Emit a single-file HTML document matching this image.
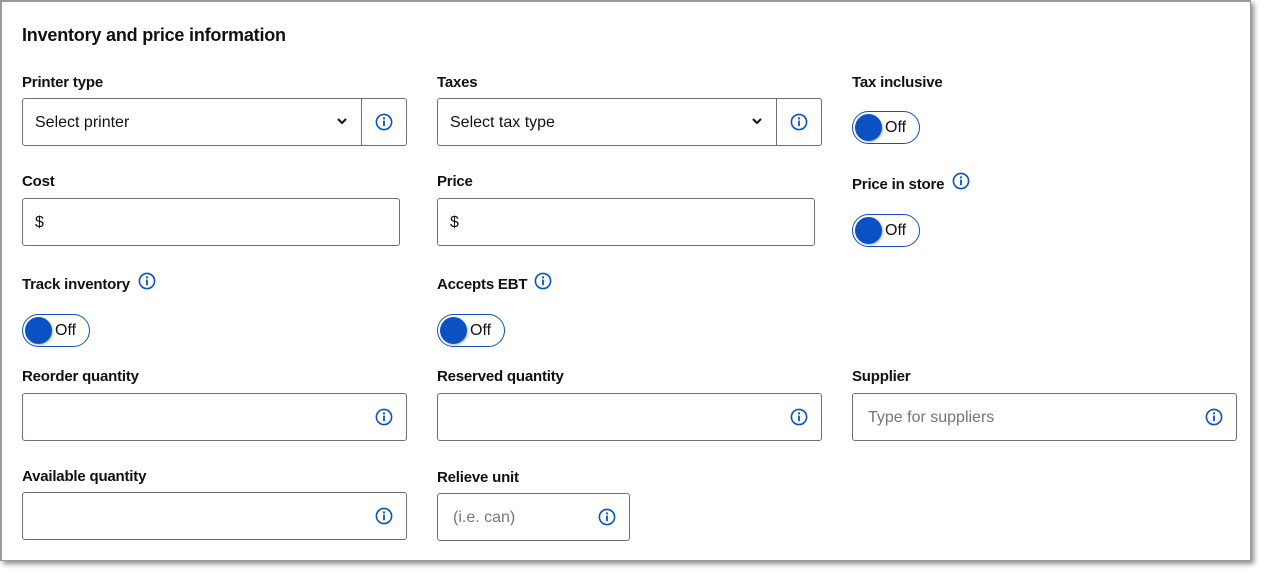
<!DOCTYPE html>
<html><head><meta charset="utf-8"><style>
*{box-sizing:border-box;margin:0;padding:0}
body{width:1264px;height:574px;background:#fff;font-family:"Liberation Sans",Arial,sans-serif;position:relative;overflow:hidden}
.frame{position:absolute;left:0;top:0;width:1251px;height:561px;border:1px solid #9a9a9a;border-width:2px 1px 1px 2px;box-shadow:3px 3px 5px rgba(0,0,0,.45);background:#fff}
.a{position:absolute}
.h{font-size:18px;font-weight:bold;color:#111;letter-spacing:-0.2px}
.l{font-size:15px;font-weight:bold;color:#111;letter-spacing:-0.2px;line-height:18px}
.box{position:absolute;border:1px solid #6f6f6f;border-radius:3px;background:#fff;font-size:16px;color:#111}
.box .t{position:absolute;left:12px;top:15px}
.ph{color:#767676}
.ic{position:absolute;width:18px;height:18px}
.tg{position:absolute;width:68px;height:33px;border:1.5px solid #0a52c4;border-radius:17px;background:#fff}
.tg .k{position:absolute;left:2px;top:2px;width:27px;height:27px;border-radius:50%;background:#0a52c4;box-shadow:1px 1px 2px rgba(0,0,0,.3)}
.tg .o{position:absolute;left:32px;top:7px;font-size:16px;color:#111}
.div{position:absolute;top:0;bottom:0;width:1px;background:#6f6f6f}
</style></head><body>
<div class="frame"></div>
<svg width="0" height="0" style="position:absolute"><defs><symbol id="i" viewBox="0 0 18 18"><circle cx="9" cy="9" r="7.6" fill="none" stroke="#0a52c4" stroke-width="1.6"/><circle cx="9" cy="5.4" r="1.1" fill="#0a52c4"/><rect x="8.1" y="7.6" width="1.8" height="5.6" fill="#0a52c4"/></symbol></defs></svg>

<div class="a h" style="left:22px;top:25px">Inventory and price information</div>

<div class="a l" style="left:22px;top:74px">Printer type</div>
<div class="box" style="left:22px;top:98px;width:385px;height:48px"><span class="t">Select printer</span>
<svg class="a" style="left:313px;top:17px" width="12" height="10" viewBox="0 0 12 10"><path d="M2 3l4 4 4-4" fill="none" stroke="#111" stroke-width="2"/></svg>
<div class="div" style="left:338px"></div><svg class="ic" style="left:352px;top:14px"><use href="#i"/></svg></div>

<div class="a l" style="left:437px;top:74px">Taxes</div>
<div class="box" style="left:437px;top:98px;width:385px;height:48px"><span class="t">Select tax type</span>
<svg class="a" style="left:313px;top:17px" width="12" height="10" viewBox="0 0 12 10"><path d="M2 3l4 4 4-4" fill="none" stroke="#111" stroke-width="2"/></svg>
<div class="div" style="left:338px"></div><svg class="ic" style="left:352px;top:14px"><use href="#i"/></svg></div>

<div class="a l" style="left:852px;top:74px">Tax inclusive</div>
<div class="tg" style="left:852px;top:111px"><div class="k"></div><span class="o">Off</span></div>

<div class="a l" style="left:22px;top:173px">Cost</div>
<div class="box" style="left:22px;top:198px;width:378px;height:48px"><span class="t">$</span></div>
<div class="a l" style="left:437px;top:173px">Price</div>
<div class="box" style="left:437px;top:198px;width:378px;height:48px"><span class="t">$</span></div>

<div class="a l" style="left:852px;top:176px">Price in store</div>
<svg class="ic" style="left:952px;top:172px"><use href="#i"/></svg>
<div class="tg" style="left:852px;top:214px"><div class="k"></div><span class="o">Off</span></div>

<div class="a l" style="left:22px;top:276px">Track inventory</div>
<svg class="ic" style="left:138px;top:272px"><use href="#i"/></svg>
<div class="tg" style="left:22px;top:314px"><div class="k"></div><span class="o">Off</span></div>

<div class="a l" style="left:437px;top:276px">Accepts EBT</div>
<svg class="ic" style="left:534px;top:272px"><use href="#i"/></svg>
<div class="tg" style="left:437px;top:314px"><div class="k"></div><span class="o">Off</span></div>

<div class="a l" style="left:22px;top:368px">Reorder quantity</div>
<div class="box" style="left:22px;top:393px;width:385px;height:48px"><svg class="ic" style="left:352px;top:14px"><use href="#i"/></svg></div>
<div class="a l" style="left:437px;top:368px">Reserved quantity</div>
<div class="box" style="left:437px;top:393px;width:385px;height:48px"><svg class="ic" style="left:352px;top:14px"><use href="#i"/></svg></div>
<div class="a l" style="left:852px;top:368px">Supplier</div>
<div class="box" style="left:852px;top:393px;width:385px;height:48px"><span class="t ph" style="left:15px">Type for suppliers</span><svg class="ic" style="left:352px;top:14px"><use href="#i"/></svg></div>

<div class="a l" style="left:22px;top:468px">Available quantity</div>
<div class="box" style="left:22px;top:492px;width:385px;height:48px"><svg class="ic" style="left:352px;top:14px"><use href="#i"/></svg></div>
<div class="a l" style="left:437px;top:469px">Relieve unit</div>
<div class="box" style="left:437px;top:493px;width:193px;height:48px"><span class="t ph" style="left:15px">(i.e. can)</span><svg class="ic" style="left:160px;top:14px"><use href="#i"/></svg></div>
</body></html>
